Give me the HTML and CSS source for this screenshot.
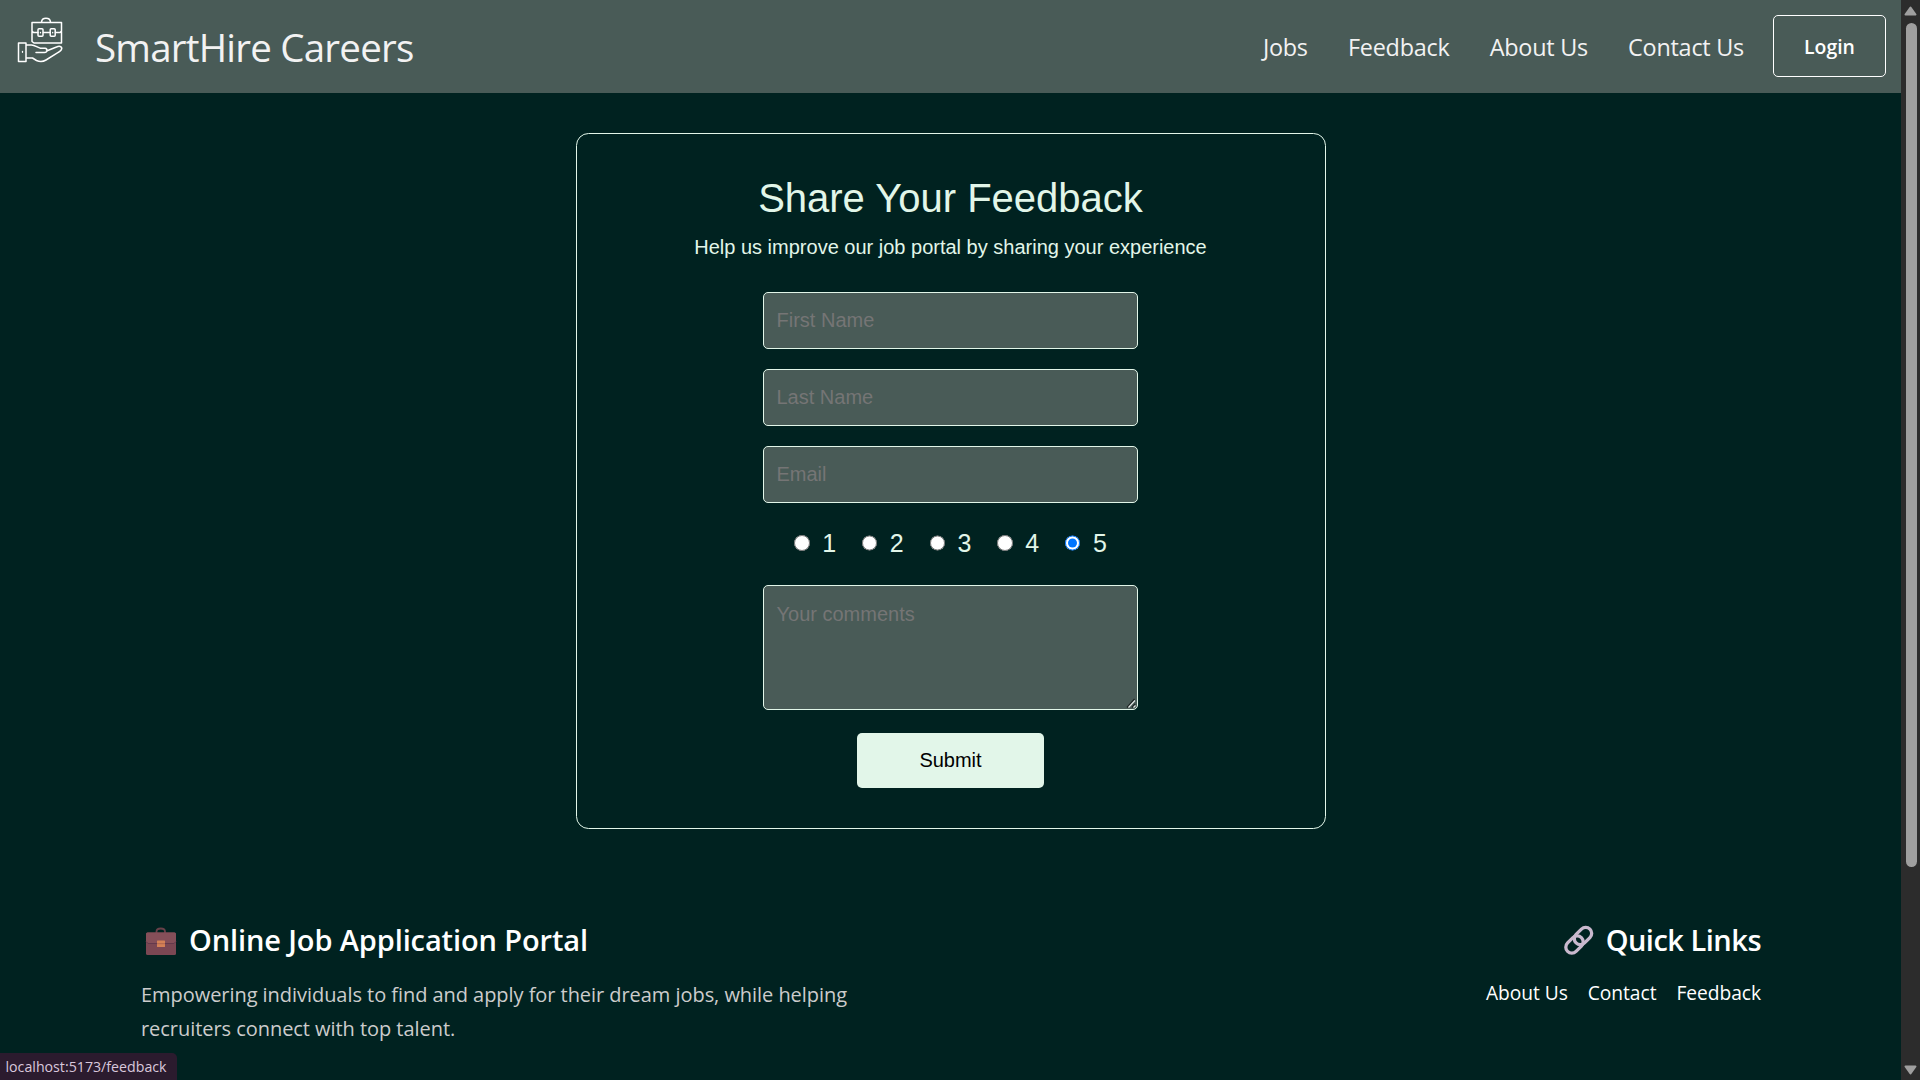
FILE: index.html
```html
<!DOCTYPE html>
<html lang="en">
<head>
<meta charset="utf-8">
<title>SmartHire Careers</title>
<link rel="stylesheet" href="styles.css">
</head>
<body>
<div class="window">
  <div class="page">
    <header class="navbar">
      <svg class="logo" viewBox="0 0 50 50" fill="none" stroke="#fff" stroke-width="1.500" stroke-linejoin="round" stroke-linecap="round">
        <path d="M16 26V7.500h29.500V28H18L16 26.500M25.500 7c.5-5 8.500-5 9 0M16 16l1.500 1.500h4.500M27.500 17.500h6.500M39.500 17.500h4.500l1.500-1.500"/>
        <rect x="22" y="13.800" width="5" height="7.500" rx="1"/>
        <rect x="34.200" y="13.800" width="5" height="7.500" rx="1"/>
        <path d="M24.500 17.300v.5M36.700 17.300v.5M6.500 36.500v.8" stroke-width="1.300"/>
        <path d="M2.500 28h7.500v18.500H2.500zM10 30h5.500c3.500 0 6 2.800 9 3.200h4.500c3 .4 2.500 4.300-.5 4.300H20M30.500 36l10-4c4-1.800 6.500.5 4.500 3.200-1 1.300-2.500 2.200-4 3l-11 6.800c-3 1.800-6.500 1.800-9.500.5l-4-2.500H10"/>
      </svg>
      <div class="brand">SmartHire Careers</div>
      <nav class="menu">
        <a>Jobs</a><a>Feedback</a><a>About Us</a><a>Contact Us</a>
      </nav>
      <button class="login">Login</button>
    </header>
    <main class="card">
      <h1 class="title">Share Your Feedback</h1>
      <p class="subtitle">Help us improve our job portal by sharing your experience</p>
      <form class="form">
        <input class="field" type="text" placeholder="First Name">
        <input class="field" type="text" placeholder="Last Name">
        <input class="field" type="text" placeholder="Email">
        <div class="rating">
          <label><input type="radio" name="rating">1</label>
          <label><input type="radio" name="rating">2</label>
          <label><input type="radio" name="rating">3</label>
          <label><input type="radio" name="rating">4</label>
          <label><input type="radio" name="rating" checked>5</label>
        </div>
        <div class="comment-box">
          <textarea class="field comments" placeholder="Your comments"></textarea>
          <svg class="grip" viewBox="0 0 10 10" stroke-width="1.200">
            <path d="M1 9.500L8.500 1M6 9.500L9 6" stroke="#1d2423"/>
            <path d="M2.500 9.500L9 2.500M7.500 9.500L9.500 7.500" stroke="#dfe3e2"/>
          </svg>
        </div>
        <button class="submit" type="button">Submit</button>
      </form>
    </main>
    <footer class="footer">
      <section class="about">
        <h2 class="heading">
          <svg class="case" viewBox="0 0 40 40">
            <path d="M15.500 13v-1.500c0-4 8.500-4 8.500 0V13" fill="none" stroke="#684149" stroke-width="1.800"/>
            <rect x="5" y="12.500" width="30" height="22.500" rx="1.500" fill="#7b4753"/>
            <path d="M5 14a1.500 1.500 0 0 1 1.500-1.500h27A1.500 1.500 0 0 1 35 14v7.500l-2 1.500H7l-2-1.500z" fill="#854f59"/>
            <path d="M5 21.500L7 23.500h26l2-2" fill="none" stroke="#64394c" stroke-width="1"/>
            <rect x="16" y="20.500" width="8" height="6.500" rx=".5" fill="#d48156"/>
            <path d="M16 23.700h8" stroke="#a65f4c" stroke-width=".8"/>
          </svg>
          <span>Online Job Application Portal</span>
        </h2>
        <p class="text">Empowering individuals to find and apply for their dream jobs, while helping recruiters connect with top talent.</p>
      </section>
      <section class="quick">
        <h2 class="heading tight">
          <svg class="chain" viewBox="0 0 32 40" fill="none" stroke="#c9b9ce" stroke-width="3.300">
            <rect x="-9.800" y="-6" width="19.600" height="12" rx="6" transform="translate(11.500 24.500) rotate(-45)"/>
            <rect x="-9.800" y="-6" width="19.600" height="12" rx="6" transform="translate(20 16) rotate(-45)"/>
          </svg>
          <span>Quick Links</span>
        </h2>
        <div class="links"><a>About Us</a><a>Contact</a><a>Feedback</a></div>
      </section>
    </footer>
  </div>
  <div class="scrollbar">
    <svg class="arrow" viewBox="0 0 13 10"><path d="M6.500 1.500L11.500 8.500H1.500z"/></svg>
    <div class="thumb"></div>
    <svg class="arrow" viewBox="0 0 13 10"><path d="M6.500 8.500L11.500 1.500H1.500z"/></svg>
  </div>
  <div class="status">localhost:5173/feedback</div>
</div>
</body>
</html>
```
FILE: styles.css
```css
* { box-sizing: border-box; }
body { margin: 0; background: #002220; font-family: "Open Sans", sans-serif; }
.window { position: relative; display: flex; width: 1920px; height: 1080px; overflow: hidden; }
.page { width: 1901px; height: 1080px; }

.navbar { display: flex; align-items: center; height: 93px; padding: 0 15px 0 16px; background: #495b57; color: #f2f2f2; }
.logo { width: 50px; height: 50px; margin-bottom: 14px; }
.brand { margin-left: 29px; font-size: 38.5px; line-height: 60px; letter-spacing: -0.78px; }
.menu { display: flex; gap: 40.2px; margin-left: auto; font-size: 23.4px; line-height: 36px; letter-spacing: -0.24px; }
.login { width: 113px; height: 62px; margin: 0 0 1px 29px; padding: 2px 0 0; border: 1px solid #fff; border-radius: 5px; background: none; color: #fff; font: 600 19.4px/30px "Open Sans", sans-serif; }

.card { width: 750px; height: 696px; margin: 40px auto 0; padding: 40px; border: 1px solid #e2f6e9; border-radius: 12.5px; color: #e2f6e9; text-align: center; font-family: "Liberation Sans", Arial, sans-serif; }
.title { margin: 0 0 10px; font-size: 40px; font-weight: 400; line-height: 48px; }
.subtitle { margin: 0 0 30px; font-size: 20px; line-height: 30px; }
.form { display: flex; flex-direction: column; align-items: center; }
.field { width: 375px; height: 57px; margin: 0 0 20px; padding: 12px 12.5px; border: 1px solid #e2f6e9; border-radius: 5px; background: #495b57; font: 20px/30px "Liberation Sans", Arial, sans-serif; }
.field::placeholder { color: #757575; }
.rating { display: flex; gap: 25.8px; height: 42px; align-items: center; padding-bottom: 2px; margin-bottom: 20px; font-size: 25px; line-height: 38px; }
.rating label { display: flex; align-items: center; gap: 12.5px; }
.rating input { width: 15.5px; height: 16px; margin: 0; }
.comment-box { position: relative; margin-bottom: 23px; }
.comments { display: block; height: 125px; margin: 0; padding-top: 13px; resize: none; }
.grip { position: absolute; right: 2px; bottom: 2px; width: 10px; height: 10px; }
.submit { width: 187px; height: 55px; padding: 0 0 2px; border: 0; border-radius: 5px; background: #e2f6e9; color: #000; font: 20px/30px "Liberation Sans", Arial, sans-serif; }

.footer { display: flex; justify-content: space-between; padding: 91px 140px 0 141px; color: #fff; }
.about { width: 750px; }
.heading { display: flex; margin: 0 0 18px; font-size: 29px; font-weight: 600; line-height: 40px; letter-spacing: -0.12px; }
.case { width: 40px; height: 40px; margin-right: 8px; }
.chain { width: 32px; height: 40px; margin-right: 11px; }
.tight { justify-content: flex-end; letter-spacing: -0.5px; }
.text { margin: 0; color: #ccc; font-size: 20px; line-height: 34px; letter-spacing: -0.05px; }
.links { display: flex; gap: 20px; font-size: 19.2px; line-height: 30px; letter-spacing: -0.04px; }

.scrollbar { display: flex; flex-direction: column; align-items: center; width: 19px; height: 1080px; padding: 6px 0 5px; background: #2c2c2c; }
.arrow { width: 13px; height: 10px; fill: #9f9f9f; stroke: #9f9f9f; stroke-width: 2; stroke-linejoin: round; }
.thumb { width: 11px; height: 844px; margin: 7px 0 198px 1px; border-radius: 6px; background: #9f9f9f; }

.status { position: absolute; left: 0; bottom: 0; width: 177px; height: 27px; padding-left: 5.5px; border-top-right-radius: 5px; background: #2b1b2e; color: #d9c8dc; font-size: 14.2px; line-height: 27px; white-space: nowrap; }
```
